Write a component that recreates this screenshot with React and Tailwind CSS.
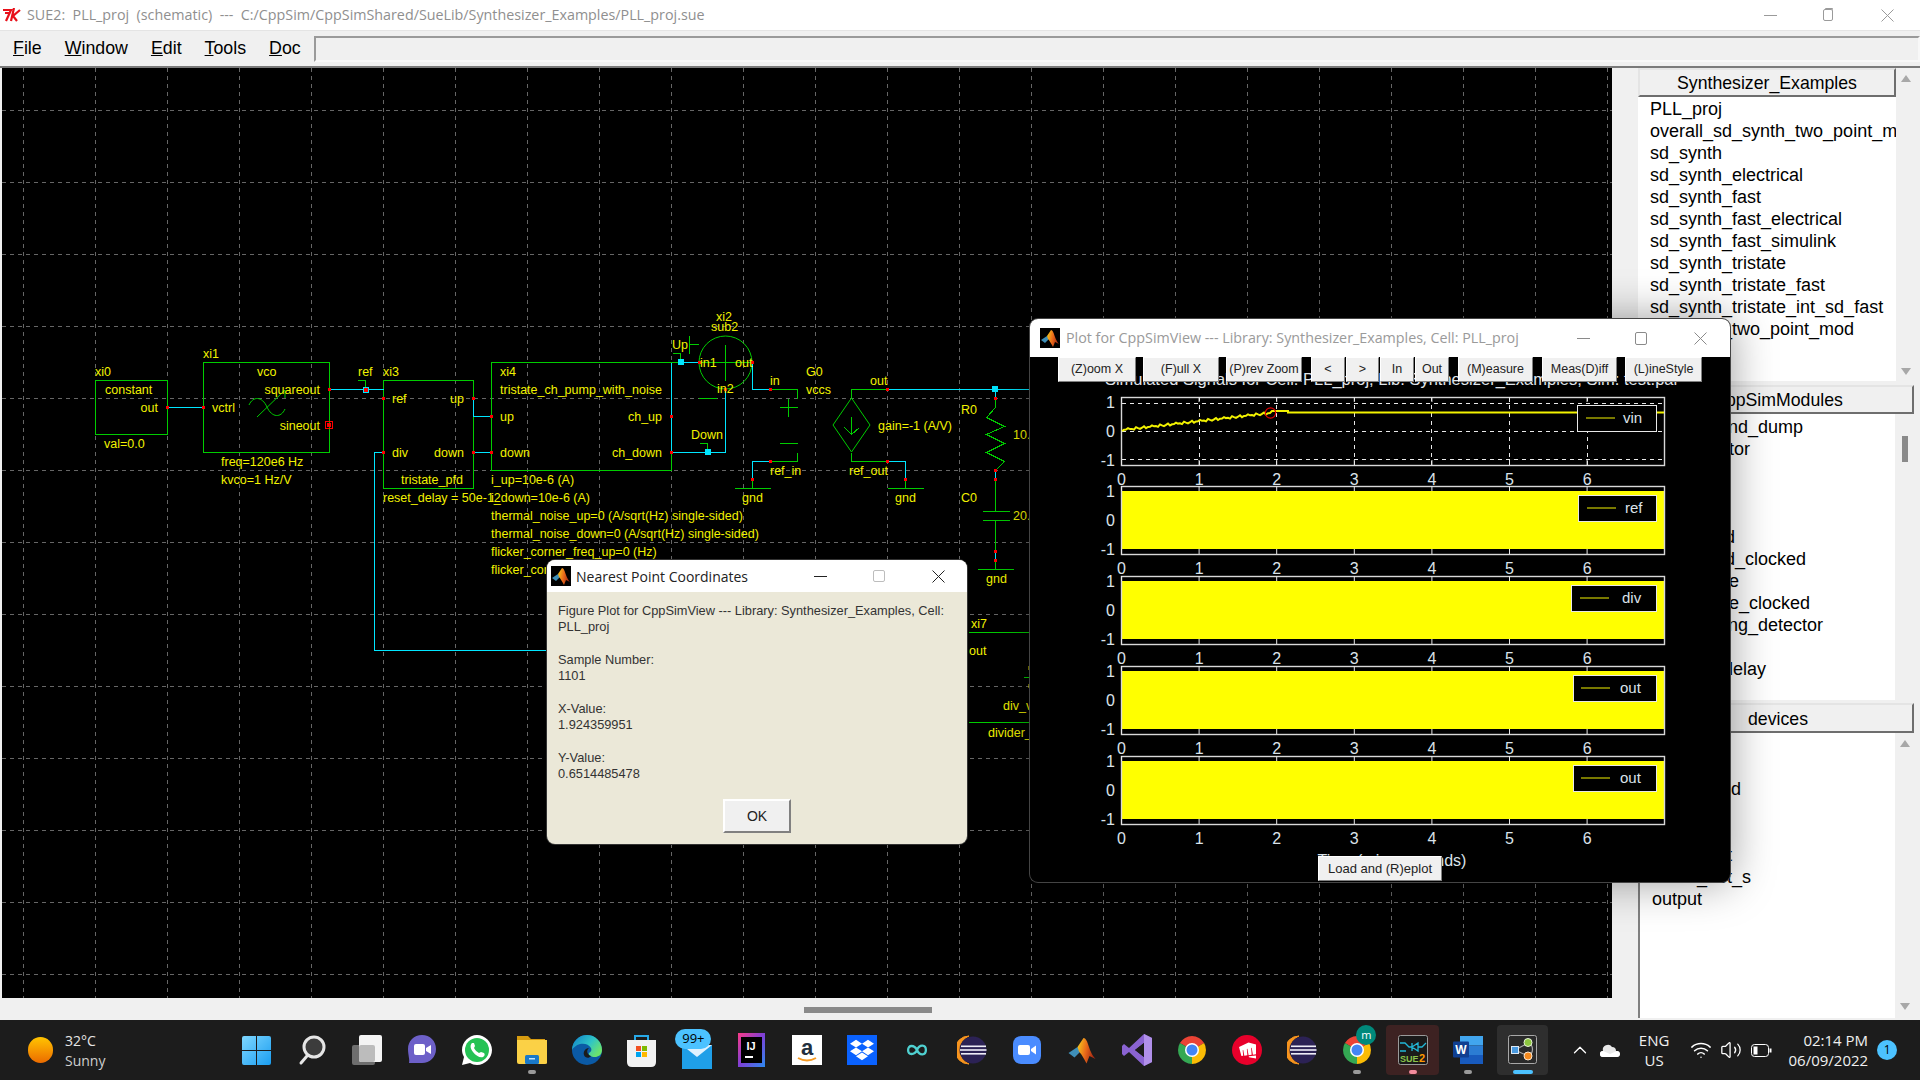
import { ChevronUp, Wifi, Volume2 } from 'lucide-react';
import { FaDropbox } from 'react-icons/fa';
import { SiRiotgames } from 'react-icons/si';

const YELLOW = '#f2f200';
const GREEN = '#00cc00';
const CYAN = '#00e6ff';
const RED = '#ff0000';

// schematic labels: x, baseline, text, anchor
const labels = [
  [95, 376, 'xi0'], [105, 394, 'constant'], [158, 412, 'out', 'end'], [104, 448, 'val=0.0'],
  [203, 358, 'xi1'], [257, 376, 'vco'], [320, 394, 'squareout', 'end'], [212, 412, 'vctrl'],
  [320, 430, 'sineout', 'end'], [221, 466, 'freq=120e6 Hz'], [221, 484, 'kvco=1 Hz/V'],
  [358, 376, 'ref'], [383, 376, 'xi3'], [392, 403, 'ref'], [464, 403, 'up', 'end'],
  [392, 457, 'div'], [464, 457, 'down', 'end'], [401, 484, 'tristate_pfd'], [383, 502, 'reset_delay = 50e-12'],
  [500, 376, 'xi4'], [500, 394, 'tristate_ch_pump_with_noise'], [500, 421, 'up'], [500, 457, 'down'],
  [662, 421, 'ch_up', 'end'], [662, 457, 'ch_down', 'end'], [491, 484, 'i_up=10e-6 (A)'], [491, 502, 'i_down=10e-6 (A)'],
  [491, 520, 'thermal_noise_up=0 (A/sqrt(Hz) single-sided)'], [491, 538, 'thermal_noise_down=0 (A/sqrt(Hz) single-sided)'],
  [491, 556, 'flicker_corner_freq_up=0 (Hz)'], [491, 574, 'flicker_corner_freq_down=0 (Hz)'],
  [716, 321, 'xi2'], [711, 331, 'sub2'], [672, 349, 'Up'], [700, 367, 'in1'], [735, 367, 'out'], [717, 393, 'in2'], [691, 439, 'Down'],
  [770, 385, 'in'], [806, 376, 'G0'], [806, 394, 'vccs'], [770, 475, 'ref_in'], [742, 502, 'gnd'],
  [870, 385, 'out'], [878, 430, 'gain=-1 (A/V)'], [849, 475, 'ref_out'], [895, 502, 'gnd'],
  [961, 414, 'R0'], [1013, 439, '10.'], [961, 502, 'C0'], [1013, 520, '20.'], [986, 583, 'gnd'],
  [971, 628, 'xi7'], [969, 655, 'out'], [1003, 710, 'div_v'], [988, 737, 'divider_'],
];

const greenLines = [
  '357,380 365,380 365,386', '491,362 680,362', '672,353 680,353 680,359', '699,443 707,443 707,449',
  '699,362 752,362', '725,344 725,380', '689,335 689,353', '689,344 698,344', '698,398 716,398',
  '770,389 797,389 797,398', '779,407 797,407', '788,398 788,416', '779,443 797,443', '797,452 797,461 770,461',
  '734,488 770,488', '752,479 752,488', '851,398 851,389 887,389', '851,452 851,461 887,461', '887,488 923,488', '905,479 905,488',
  '851,416 851,434', '844,427 851,434 859,427', '995,398 995,407 986,417 1004,426 986,434 1004,443 986,452 1004,461 995,470 995,511',
  '982,511 1009,511', '982,520 1009,520', '995,520 995,551', '977,569 1013,569', '995,560 995,569',
  '968,632 1030,632', '1023,677 1030,677', '968,722 1030,722',
];

const cyanLines = [
  '167,407 203,407', '330,389 383,389', '473,398 473,416 491,416', '473,452 491,452', '383,452 374,452 374,650 547,650',
  '671,362 671,452', '683,362 699,362', '671,452 725,452 725,389', '752,362 752,389 770,389', '770,461 752,461 752,479',
  '887,389 1030,389', '887,461 905,461 905,479', '995,389 995,398', '995,470 995,479', '995,551 995,560',
];

const pins = [
  [167, 407], [203, 407], [329, 389], [383, 398], [473, 398], [383, 452], [473, 452], [491, 416], [491, 452],
  [671, 416], [671, 452], [699, 362], [752, 362], [725, 389], [770, 389], [770, 461], [752, 479], [887, 389], [887, 461], [905, 479],
  [995, 398], [995, 470], [995, 479], [995, 551], [995, 560],
];

const gridX = Array.from({ length: 23 }, (_, i) => 23 + i * 72);
const gridY = Array.from({ length: 13 }, (_, i) => 110 + i * 72);

function Schematic() {
  return (
    <svg viewBox="2 68 1610 930" className="block w-full h-full" fontFamily="'Liberation Sans', Arial, sans-serif">
      <g stroke="#666666" strokeDasharray="4 4" shapeRendering="crispEdges">
        {gridX.map((x) => <line key={x} x1={x + 0.5} y1="68" x2={x + 0.5} y2="998" />)}
        {gridY.map((y) => <line key={y} x1="2" y1={y + 0.5} x2="1612" y2={y + 0.5} />)}
      </g>
      <g fill="none" stroke={GREEN} shapeRendering="crispEdges">
        <rect x="95.5" y="380.5" width="72" height="54" />
        <rect x="203.5" y="362.5" width="126" height="90" />
        <rect x="383.5" y="380.5" width="90" height="108" />
        <rect x="491.5" y="362.5" width="180" height="108" />
        {greenLines.map((p) => <polyline key={p} points={p} transform="translate(.5 .5)" />)}
      </g>
      <g fill="none" stroke={GREEN}>
        <circle cx="725.5" cy="362.5" r="26.5" />
        <path d="M833 425 L851.5 398 L870 425 L851.5 452Z" />
        <path d="M249 405 C253 396 262 396 267 407 C272 418 281 418 285 409" />
        <path d="M257 417 L285 390 L285 398" />
      </g>
      <g fill="none" stroke={CYAN} shapeRendering="crispEdges">
        {cyanLines.map((p) => <polyline key={p} points={p} transform="translate(.5 .5)" />)}
      </g>
      <g fill={RED} shapeRendering="crispEdges">
        {pins.map(([x, y]) => <rect key={x + '-' + y} x={x - 1} y={y - 1} width="3" height="3" />)}
        <rect x="325.5" y="421.5" width="7" height="7" fill="none" stroke={RED} />
        <rect x="327" y="423" width="4" height="4" />
      </g>
      <g shapeRendering="crispEdges">
        <rect x="363" y="387" width="5" height="5" fill={RED} stroke={CYAN} />
        <rect x="678" y="359" width="5.5" height="5.5" fill={CYAN} />
        <rect x="705" y="449" width="5.5" height="5.5" fill={CYAN} />
        <rect x="992" y="386" width="5.5" height="5.5" fill={CYAN} />
      </g>
      <g fill={YELLOW} fontSize="12.5">
        {labels.map(([x, y, t, a]) => <text key={x + t + y} x={x} y={y} textAnchor={a || 'start'}>{t}</text>)}
      </g>
      <path d="M1029 666 V670 M1029 684 V688" stroke={YELLOW} />
    </svg>
  );
}

function MatlabIcon({ size = 20, dark = true }) {
  return (
    <svg width={size} height={size} viewBox="0 0 20 20" className={dark ? 'bg-black' : ''}>
      <defs>
        <linearGradient id="mlPeak" x1="0" y1="0" x2="1" y2=".3">
          <stop offset="0" stopColor="#f8d41c" />
          <stop offset=".55" stopColor="#ea6a1a" />
          <stop offset="1" stopColor="#a82a12" />
        </linearGradient>
      </defs>
      <path d="M1 12 L7 8 L9 11 L5 15Z" fill="#3f8fb8" />
      <path d="M7 8 L11 2 C13 2 14 6 15 9 C16 12 18 15 19 16 L15 14 L13 19 C11 15 9 12 8 11Z" fill="url(#mlPeak)" />
    </svg>
  );
}

function WinControls({ minX, color = '#666666', gapA, gapB, boxClass }) {
  return (
    <div className="flex items-center" style={{ marginLeft: minX }}>
      <div className="h-px w-[13px]" style={{ background: color }} />
      <div className={boxClass} style={{ marginLeft: gapA }} />
      <svg width="13" height="13" viewBox="0 0 13 13" stroke={color} style={{ marginLeft: gapB }}>
        <path d="M.5.5 L12.5 12.5 M12.5.5 L.5 12.5" />
      </svg>
    </div>
  );
}

const toolbar = [
  ['(Z)oom X', 'w-[78px]'], ['(F)ull X', 'w-[76px] ml-[7px]'], ['(P)rev Zoom', 'w-[76px] ml-[7px]'],
  ['<', 'w-[34px] ml-[9px]'], ['>', 'w-[33px] ml-px'], ['In', 'w-[34px] ml-px'], ['Out', 'w-[34px] ml-px'],
  ['(M)easure', 'w-[75px] ml-[9px]'], ['Meas(D)iff', 'w-[75px] ml-[9px]'], ['(L)ineStyle', 'w-[77px] ml-[8px]'],
];

const bevel = 'bg-[#f0f0f0] border border-t-white border-l-white border-r-[#808080] border-b-[#808080] text-[#222222]';

const plotTops = [397, 486, 576, 666, 756];
const legends = [
  { name: 'vin', x: 1577, y: 405, w: 79, lx: 1586, tx: 1623 },
  { name: 'ref', x: 1578, y: 495, w: 78, lx: 1587, tx: 1625 },
  { name: 'div', x: 1571, y: 585, w: 85, lx: 1580, tx: 1622 },
  { name: 'out', x: 1573, y: 675, w: 83, lx: 1581, tx: 1620 },
  { name: 'out', x: 1573, y: 765, w: 83, lx: 1581, tx: 1620 },
];
const xTicks = [0, 1, 2, 3, 4, 5, 6].map((k) => [k, 1121.5 + k * 77.6]);

// the noisy settling part of the vin trace
const vinTrace = (() => {
  const pts = [];
  for (let x = 1122; x <= 1270; x += 2) {
    const noise = x % 8 === 0 ? -1.2 : x % 6 === 0 ? 1 : 0;
    pts.push(x + ',' + (430 - (17 * (x - 1122)) / 148 + noise).toFixed(1));
  }
  pts.push('1272,411', '1288,411', '1288,412.5', '1664,412.5');
  return pts.join(' ');
})();

function PlotChart() {
  return (
    <svg viewBox="1030 357 700 525" className="block w-full h-full" fontFamily="'Liberation Sans', Arial, sans-serif">
      <text x="1392" y="385" textAnchor="middle" fill="#e0e6ec" fontSize="16.5">Simulated Signals for Cell: PLL_proj, Lib: Synthesizer_Examples, Sim: test.par</text>
      {plotTops.map((t, i) => (
        <g key={t}>
          {i > 0 && <rect x="1121.5" y={t + 5} width="543" height="58" fill="#ffff00" />}
          {i === 0 && (
            <g stroke="#e8e8e8" strokeDasharray="4 4" shapeRendering="crispEdges">
              {xTicks.slice(1).map(([k, x]) => <line key={k} x1={x} y1={t} x2={x} y2={t + 68} />)}
              <line x1="1122" y1={t + 6} x2="1664" y2={t + 6} />
              <line x1="1122" y1={t + 34} x2="1664" y2={t + 34} />
              <line x1="1122" y1={t + 62} x2="1664" y2={t + 62} />
            </g>
          )}
          <rect x="1121.5" y={t + 0.5} width="543" height="68" fill="none" stroke="#d8d8d8" strokeWidth="1.4" />
          {xTicks.map(([k, x]) => (
            <g key={k} stroke="#e8e8e8">
              <line x1={x} y1={t} x2={x} y2={t + 5} />
              <line x1={x} y1={t + 63} x2={x} y2={t + 68} />
            </g>
          ))}
          <g fill="#dbe3ea" fontSize="16" textAnchor="end">
            <text x="1115" y={t + 11}>1</text>
            <text x="1115" y={t + 40}>0</text>
            <text x="1115" y={t + 69}>-1</text>
          </g>
          <g fill="#dbe3ea" fontSize="16" textAnchor="middle">
            {xTicks.map(([k, x]) => <text key={k} x={x} y={t + 88}>{k}</text>)}
          </g>
        </g>
      ))}
      <polyline points={vinTrace} fill="none" stroke="#f2f200" strokeWidth="2" />
      <circle cx="1270.5" cy="413" r="5.2" fill="none" stroke="#e00000" strokeWidth="1.2" />
      {legends.map((l) => (
        <g key={l.y}>
          <rect x={l.x + 0.5} y={l.y + 0.5} width={l.w} height="26" fill="#000000" stroke="#e8e8e8" />
          <line x1={l.lx} y1={l.y + 13} x2={l.lx + 29} y2={l.y + 13} stroke="#f2f200" />
          <text x={l.tx} y={l.y + 18} fill="#dbe3ea" fontSize="15">{l.name}</text>
        </g>
      ))}
      <text x="1392" y="866" textAnchor="middle" fill="#dbe3ea" fontSize="16">Time (microseconds)</text>
    </svg>
  );
}

function PlotWindow() {
  return (
    <div className="absolute left-[1030px] top-[319px] w-[700px] h-[563px] rounded-[8px] overflow-hidden bg-black flex flex-col shadow-[0_0_0_1px_#444444,0_0_45px_rgba(0,0,0,0.4)]">
      <div className="h-[38px] shrink-0 bg-white flex items-center pl-[10px]">
        <MatlabIcon />
        <span className="ml-[6px] w-[480px] text-[14.3px] text-[#9a9a9a] whitespace-nowrap font-['Open_Sans',sans-serif]">Plot for CppSimView --- Library: Synthesizer_Examples, Cell: PLL_proj</span>
        <WinControls minX={31} color="#8a8a8a" gapA={45} gapB={47} boxClass="w-[12px] h-[13px] rounded-[2px] border border-[#8a8a8a]" />
      </div>
      <div className="relative flex-1">
        <PlotChart />
        <div className="absolute top-0 left-[28px] flex">
          {toolbar.map(([label, cls]) => (
            <button key={label} className={`${cls} h-[25px] ${bevel} text-[12.5px] whitespace-nowrap font-['Liberation_Sans',sans-serif]`}>{label}</button>
          ))}
        </div>
        <button className={`absolute left-[288px] top-[499px] w-[124px] h-[25px] ${bevel} text-[13px] whitespace-nowrap font-['Liberation_Sans',sans-serif]`}>Load and (R)eplot</button>
      </div>
    </div>
  );
}

function Dialog() {
  return (
    <div className="absolute left-[547px] top-[560px] w-[420px] h-[284px] rounded-[8px] overflow-hidden bg-[#ebe8d8] flex flex-col shadow-[0_0_0_1px_#333333]">
      <div className="h-[32px] shrink-0 bg-white flex items-center pl-[4px]">
        <MatlabIcon />
        <span className="ml-[5px] w-[190px] text-[14px] text-[#222222] whitespace-nowrap font-['Open_Sans',sans-serif]">Nearest Point Coordinates</span>
        <WinControls minX={48} color="#222222" gapA={46} gapB={47} boxClass="w-[12px] h-[12px] rounded-[2px] border border-[#bdbdbd]" />
      </div>
      <div className="pl-[11px] pt-[11px] text-[12.8px] leading-[16.3px] text-[#333333] font-['Liberation_Sans',sans-serif]">
        Figure Plot for CppSimView --- Library: Synthesizer_Examples, Cell:<br />
        PLL_proj<br /><br />
        Sample Number:<br />
        1101<br /><br />
        X-Value:<br />
        1.924359951<br /><br />
        Y-Value:<br />
        0.6514485478
      </div>
      <div className="mt-auto mb-[11px] flex justify-center">
        <button className={`w-[68px] h-[34px] ${bevel} border-2 text-[14px] font-['Liberation_Sans',sans-serif]`}>OK</button>
      </div>
    </div>
  );
}

function ScrollArrows({ className }) {
  return (
    <div className={`flex flex-col justify-between items-center ${className}`}>
      <div className="w-0 h-0 border-x-[5px] border-x-transparent border-b-[7px] border-b-[#a8a8a8]" />
      <div className="w-0 h-0 border-x-[5px] border-x-transparent border-t-[7px] border-t-[#a8a8a8]" />
    </div>
  );
}

const rowClass = 'h-[22px] leading-[22px] whitespace-nowrap';

function ListRows({ items, className }) {
  return (
    <div className={`bg-white overflow-hidden text-black text-[18px] ${className}`}>
      {items.map((it, i) => <div key={it + i} className={rowClass}>{it}</div>)}
    </div>
  );
}

const headerClass = 'shrink-0 flex items-center justify-center pt-[2px] bg-[#f0f0f0] border-2 border-t-[#e4e4e4] border-l-[#e4e4e4] border-r-[#6e6e6e] border-b-[#6e6e6e] text-black text-[17.7px]';

const listOne = ['PLL_proj', 'overall_sd_synth_two_point_m', 'sd_synth', 'sd_synth_electrical', 'sd_synth_fast', 'sd_synth_fast_electrical', 'sd_synth_fast_simulink', 'sd_synth_tristate', 'sd_synth_tristate_fast', 'sd_synth_tristate_int_sd_fast', 'sd_synth_two_point_mod'];
const listTwo = ['sample_and_dump', 'demodulator', 'mux', 'noise', 'inv', 'and_gated', 'and_gated_clocked', 'mux_mode', 'mux_mode_clocked', 'edge_timing_detector', 'nor', 'variable_delay'];
const listThree = ['vdd', 'nmos', 'power_gnd', 'pmos', 'gnd', 'name_net', 'name_net_s', 'output'];

function RightPanel() {
  return (
    <div className="w-[282px] h-full flex flex-col font-['Liberation_Sans',sans-serif]">
      <div className="flex h-[313px]">
        <div className="w-[258px] flex flex-col">
          <div className={`${headerClass} h-[29px]`}>Synthesizer_Examples</div>
          <ListRows items={listOne} className="flex-1 pl-[12px] pt-px" />
        </div>
        <ScrollArrows className="w-[20px] pt-[7px] pb-[6px]" />
      </div>
      <div className="h-[4px]" />
      <div className={`${headerClass} h-[29px] w-[276px] pl-[4px]`}>CppSimModules</div>
      <div className="flex h-[286px]">
        <ListRows items={listTwo} className="w-[257px] pl-[12px] pt-[2px]" />
        <div className="w-[19px] pt-[22px] flex justify-center">
          <div className="w-[6px] h-[26px] bg-[#8a8a8a]" />
        </div>
      </div>
      <div className="h-[3px]" />
      <div className={`${headerClass} h-[30px] w-[276px] pl-[4px]`}>devices</div>
      <div className="flex h-[285px]">
        <ListRows items={listThree} className="w-[257px] pl-[12px] pt-px border-l-2 border-l-[#808080]" />
        <ScrollArrows className="w-[19px] pt-[7px] pb-[8px]" />
      </div>
    </div>
  );
}

/* ---- taskbar icons ---- */
const Win = () => (
  <svg width="29" height="29" viewBox="0 0 29 29">
    <defs><linearGradient id="wg" x1="0" y1="0" x2="1" y2="1"><stop offset="0" stopColor="#7fd7ff" /><stop offset="1" stopColor="#1a9df0" /></linearGradient></defs>
    <path d="M0 2 Q0 0 2 0 H14 V14 H0Z M15 0 H27 Q29 0 29 2 V14 H15Z M0 15 H14 V29 H2 Q0 29 0 27Z M15 15 H29 V27 Q29 29 27 29 H15Z" fill="url(#wg)" />
  </svg>
);
const Search = () => (
  <svg width="30" height="32" viewBox="0 0 30 32">
    <circle cx="17" cy="13" r="10" fill="#3c3c3c" stroke="#e6e6e6" strokeWidth="3" />
    <path d="M10 22 L4 29" stroke="#e6e6e6" strokeWidth="3" strokeLinecap="round" />
  </svg>
);
const TaskView = () => (
  <svg width="30" height="30" viewBox="0 0 30 30">
    <rect x="0" y="10" width="23" height="20" rx="2" fill="#6e6e6e" />
    <rect x="7" y="0" width="23" height="27" rx="2" fill="#f4f4f4" />
    <rect x="7" y="10" width="16" height="17" rx="2" fill="#bcbcbc" />
  </svg>
);
const Teams = () => (
  <svg width="28" height="30" viewBox="0 0 28 30">
    <path d="M14 0 C22 0 28 6 28 14 C28 22 22 28 14 28 H1 C2 25 0 20 0 14 C0 6 6 0 14 0Z" fill="#6d60c8" />
    <rect x="6" y="9" width="11" height="11" rx="2" fill="#fff" />
    <path d="M18 13 L23 10 V19 L18 16Z" fill="#fff" />
  </svg>
);
const Whatsapp = () => (
  <svg width="30" height="30" viewBox="0 0 30 30">
    <path d="M15 0 C23 0 30 7 30 15 C30 23 23 30 15 30 C12 30 10 29 8 28 L0 30 L2 22 C1 20 0 18 0 15 C0 7 7 0 15 0Z" fill="#fff" />
    <circle cx="15" cy="15" r="12" fill="#25c254" />
    <path d="M10 8 C8 10 8 13 11 17 C14 21 18 23 21 22 C23 21 23 19 22 18 L19 17 L17 18 C15 17 13 15 12 13 L13 11 L12 8Z" fill="#fff" />
  </svg>
);
const Explorer = () => (
  <svg width="30" height="32" viewBox="0 0 30 32">
    <path d="M0 2 H11 L14 5 H28 V12 H0Z" fill="#d79c10" />
    <path d="M0 6 H30 V29 Q30 30 28 30 H2 Q0 30 0 28Z" fill="#fbd146" />
    <rect x="8" y="21" width="14" height="9" rx="1.5" fill="#1a79c8" />
    <rect x="12" y="24" width="6" height="1.5" fill="#bfe3ff" />
  </svg>
);
const Edge = () => (
  <svg width="30" height="30" viewBox="0 0 30 30">
    <defs><linearGradient id="eg" x1="0" y1="0" x2="1" y2=".6"><stop offset="0" stopColor="#0f7fc9" /><stop offset=".6" stopColor="#2fc4c7" /><stop offset="1" stopColor="#6be36d" /></linearGradient></defs>
    <circle cx="15" cy="15" r="15" fill="#0b5aa5" />
    <path d="M0 15 A15 15 0 0 1 30 15 C30 20 26 22 23 22 C19 22 16 20 17 18 C19 17 20 15 19 13 C17 9 12 8 8 9 C4 10 1 13 0 15Z" fill="url(#eg)" />
    <path d="M19 21 C17 24 13 23 12 20 C11 17 13 13 17 13 C14 15 15 20 19 21Z" fill="#1b1b1b" />
  </svg>
);
const Store = () => (
  <svg width="29" height="33" viewBox="0 0 29 33">
    <path d="M8 6 V2 H21 V6" fill="none" stroke="#27a9e8" strokeWidth="2" />
    <path d="M0 6 H29 V28 Q29 33 24 33 H5 Q0 33 0 28Z" fill="#f2f2f2" />
    <rect x="9" y="12" width="5" height="5" fill="#f25022" />
    <rect x="15" y="12" width="5" height="5" fill="#7fba00" />
    <rect x="9" y="18" width="5" height="5" fill="#00a4ef" />
    <rect x="15" y="18" width="5" height="5" fill="#ffb900" />
  </svg>
);
const Mail = () => (
  <svg width="30" height="24" viewBox="0 0 30 24">
    <rect width="30" height="24" fill="#1f9fe8" />
    <path d="M0 0 L15 12 L30 0Z" fill="#dff2ff" />
  </svg>
);
const Idea = () => (
  <svg width="27" height="34" viewBox="0 0 27 34">
    <defs><linearGradient id="ig" x1="0" y1="0" x2="1" y2="1"><stop offset="0" stopColor="#fc3a86" /><stop offset=".5" stopColor="#7d3fd6" /><stop offset="1" stopColor="#2b8bf0" /></linearGradient></defs>
    <rect width="27" height="34" fill="url(#ig)" />
    <rect x="3" y="4" width="21" height="26" fill="#000" />
    <text x="13" y="17" textAnchor="middle" fontSize="11" fontWeight="bold" fill="#fff" fontFamily="'Liberation Sans', sans-serif">IJ</text>
    <rect x="7" y="23" width="8" height="2" fill="#fff" />
  </svg>
);
const Amazon = () => (
  <svg width="30" height="30" viewBox="0 0 30 30">
    <rect width="30" height="30" fill="#fff" />
    <text x="15" y="20" textAnchor="middle" fontSize="22" fontWeight="bold" fill="#232f3e" fontFamily="'Liberation Sans', sans-serif">a</text>
    <path d="M6 23 Q15 28 24 23" fill="none" stroke="#f59a23" strokeWidth="2" />
  </svg>
);
const Dropbox = () => (
  <div className="w-[30px] h-[30px] bg-[#0a62ff] flex items-center justify-center"><FaDropbox size={24} color="#ffffff" /></div>
);
const Infinity2 = () => (
  <svg width="22" height="16" viewBox="0 0 24 18" fill="none" stroke="#4fd0d0" strokeWidth="2.6">
    <path d="M12 9 C9 3 2 3 2 9 C2 15 9 15 12 9 C15 2 22 3 22 9 C22 15 15 16 12 9Z" />
  </svg>
);
const Eclipse = () => (
  <svg width="30" height="30" viewBox="0 0 30 30">
    <path d="M12 1 A14 14 0 0 0 12 29 A15 15 0 0 1 12 1Z" fill="#f7941e" stroke="#f7941e" />
    <circle cx="16" cy="15" r="13.5" fill="#2c2255" />
    <g fill="#f0eef8"><rect x="4" y="10.5" width="25" height="1.6" /><rect x="3" y="14.2" width="26.5" height="1.6" /><rect x="4" y="18" width="25" height="1.6" /></g>
  </svg>
);
const Zoom = () => (
  <svg width="28" height="28" viewBox="0 0 28 28">
    <rect width="28" height="28" rx="8" fill="#4a8cff" />
    <rect x="5" y="9" width="12" height="10" rx="2" fill="#fff" />
    <path d="M18 13 L23 9.5 V18.5 L18 15Z" fill="#fff" />
  </svg>
);
const VS = () => (
  <svg width="30" height="32" viewBox="0 0 30 32">
    <path d="M22 0 L30 4 V28 L22 32 L7 18 L2 22 L0 20 V12 L2 10 L7 14Z M22 9 L13 16 L22 23Z" fill="#8a63d2" fillRule="evenodd" />
    <path d="M22 0 L30 4 V28 L22 32Z" fill="#b190ea" />
    <path d="M22 9 L22 23 L13 16Z" fill="#1c1c1c" />
  </svg>
);
const Chrome = () => (
  <svg width="28" height="28" viewBox="2 2 28 28">
    <path d="M16 16 L3.9 9 A14 14 0 0 1 28.1 9Z" fill="#ea4335" />
    <path d="M16 16 L28.1 9 A14 14 0 0 1 16 30Z" fill="#fbbc05" />
    <path d="M16 16 L16 30 A14 14 0 0 1 3.9 9Z" fill="#34a853" />
    <circle cx="16" cy="16" r="7" fill="#fff" />
    <circle cx="16" cy="16" r="5.5" fill="#4285f4" />
  </svg>
);
const Riot = () => (
  <div className="w-[30px] h-[30px] rounded-full bg-[#e8002b] flex items-center justify-center"><SiRiotgames size={17} color="#ffffff" /></div>
);
const ChromeM = () => (
  <div className="relative">
    <Chrome />
    <div className="absolute -top-[11px] left-[13px] w-[20px] h-[20px] rounded-full bg-[#00897b] flex items-center justify-center text-[11px] text-white">m</div>
  </div>
);
const Sue = () => (
  <svg width="30" height="30" viewBox="0 0 30 30">
    <rect x=".5" y=".5" width="29" height="29" rx="2" fill="#1a1a1a" stroke="#9a9a9a" />
    <path d="M2 8 H7 L11 12 H14 M14 8 V16 M14 12 L20 8 V16 L14 12 M20 12 H24 L28 8 M2 16 H8" fill="none" stroke="#22b8d8" strokeWidth="1.3" />
    <text x="2" y="27" fontSize="9" fontWeight="bold" fill="#8bc34a" fontFamily="'Liberation Sans', sans-serif">SUE</text>
    <text x="21" y="27" fontSize="11" fontWeight="bold" fill="#ff9800" fontFamily="'Liberation Sans', sans-serif">2</text>
  </svg>
);
const Word = () => (
  <svg width="30" height="28" viewBox="0 0 30 28">
    <rect x="7" y="0" width="23" height="9.5" fill="#41a5ee" />
    <rect x="7" y="9.5" width="23" height="9.5" fill="#2b7cd3" />
    <rect x="7" y="19" width="23" height="9" fill="#185abd" />
    <rect x="0" y="5.5" width="16" height="16" rx="1" fill="#103f91" />
    <text x="8" y="18" textAnchor="middle" fontSize="12" fontWeight="bold" fill="#fff" fontFamily="'Liberation Sans', sans-serif">W</text>
  </svg>
);
const CppSim = () => (
  <svg width="30" height="30" viewBox="0 0 30 30">
    <rect x=".5" y=".5" width="28" height="28" rx="2" fill="#2a2a2a" stroke="#a8a8a8" />
    <path d="M7 15 L20 8 C26 10 26 18 20 21 L7 15" fill="none" stroke="#a8a8a8" strokeWidth="1.2" />
    <rect x="3.5" y="11.5" width="7" height="7" fill="#4a9ae0" stroke="#dce8f4" />
    <circle cx="20" cy="7.5" r="4" fill="#8cc63f" stroke="#e8f4d8" />
    <circle cx="20" cy="21" r="4" fill="#f58a1f" stroke="#fbe8d2" />
  </svg>
);

const taskIcons = [
  { C: Win }, { C: Search }, { C: TaskView }, { C: Teams }, { C: Whatsapp }, { C: Explorer, dot: true }, { C: Edge }, { C: Store },
  { C: Mail, mail: true }, { C: Idea }, { C: Amazon }, { C: Dropbox }, { C: Infinity2 }, { C: Eclipse }, { C: Zoom },
  { C: () => <MatlabIcon size={30} dark={false} /> }, { C: VS }, { C: Chrome }, { C: Riot }, { C: Eclipse }, { C: ChromeM, dot: true },
  { C: Sue, sue: true }, { C: Word, dot: true }, { C: CppSim, active: true },
];

function TaskSlot({ item }) {
  const { C, dot, mail, sue, active } = item;
  return (
    <div className="relative w-[55.05px] h-full flex items-center justify-center">
      {sue && <div className="absolute inset-y-[5px] inset-x-[1px] rounded-[4px] bg-[#3d2222]" />}
      {active && <div className="absolute inset-y-[5px] inset-x-[2px] rounded-[4px] bg-[#2e2e2e]" />}
      <div className={`relative ${mail ? 'mt-[14px]' : ''}`}><C /></div>
      {mail && <div className="absolute left-[6px] top-[9px] w-[36px] h-[20px] rounded-[10px] bg-[#4cc2ff] flex items-center justify-center text-[13px] text-black">99+</div>}
      {dot && <div className="absolute bottom-[6px] w-[8px] h-[4px] rounded-full bg-[#9a9a9a]" />}
      {sue && <div className="absolute bottom-[6px] w-[8px] h-[4px] rounded-full bg-[#f28b9c]" />}
      {active && <div className="absolute bottom-[6px] w-[20px] h-[4px] rounded-full bg-[#4cc2ff]" />}
    </div>
  );
}

function Taskbar() {
  return (
    <div className="h-[60px] shrink-0 bg-[#1c1c1c] flex items-center text-white font-['Open_Sans',sans-serif]">
      <div className="w-[229px] flex items-center pl-[28px]">
        <div className="w-[25px] h-[26px] rounded-full bg-gradient-to-b from-[#ffc400] to-[#ea6a00]" />
        <div className="ml-[12px] mt-px text-[14px] leading-[20px] text-[#e6e6e6]">
          <div>32°C</div>
          <div className="text-[#cfcfcf]">Sunny</div>
        </div>
      </div>
      <div className="flex h-full">
        {taskIcons.map((item, i) => <TaskSlot key={i} item={item} />)}
      </div>
      <ChevronUp size={22} strokeWidth={1.4} className="ml-[19px] text-white" />
      <svg width="20" height="13" viewBox="0 0 20 13" className="ml-[9px]">
        <path d="M3 13 A3 3 0 0 1 3 7 A5 5 0 0 1 12 3 A4 4 0 0 1 16 7 A3 3 0 0 1 17 13Z" fill="#e8e8e8" />
        <path d="M3 13 A3 3 0 0 1 3 7 L10 10 L17 7 A3 3 0 0 1 17 13Z" fill="#ffffff" />
      </svg>
      <div className="ml-[11px] w-[46px] text-center text-[15px] leading-[20px] text-[#f0f0f0]">
        <div>ENG</div>
        <div>US</div>
      </div>
      <Wifi size={22} strokeWidth={1.7} className="ml-[13px] text-white" />
      <Volume2 size={22} strokeWidth={1.4} className="ml-[8px] text-white" />
      <svg width="21" height="13" viewBox="0 0 21 13" className="ml-[9px]" fill="none" stroke="#ffffff">
        <rect x=".5" y=".5" width="17" height="12" rx="3" />
        <rect x="2.5" y="2.5" width="4" height="8" fill="#ffffff" stroke="none" />
        <path d="M19.5 4.5 V8.5" strokeWidth="2" />
      </svg>
      <div className="ml-[5px] w-[91px] text-right text-[15px] leading-[20px] text-[#f0f0f0] whitespace-nowrap">
        <div>02:14 PM</div>
        <div>06/09/2022</div>
      </div>
      <div className="ml-[9px] w-[20px] h-[20px] rounded-full bg-[#4cc2ff] flex items-center justify-center text-[12px] text-black">1</div>
    </div>
  );
}

export default function App() {
  return (
    <div className="relative w-[1920px] h-[1080px] overflow-hidden bg-[#f0f0f0] flex flex-col">
      {/* main window title */}
      <div className="h-[30px] shrink-0 bg-white flex items-center pl-[3px]">
        <svg width="19" height="14" viewBox="0 0 19 14" fill="none" stroke="#e8101a" strokeWidth="2.2">
          <path d="M0 2 H8 L3 13 M11 0 L8 13 M17 2 L10 8 L14 13 M7 5 H2" />
        </svg>
        <span className="ml-[5px] w-[1680px] text-[14.3px] text-[#8f8f8f] whitespace-pre font-['Open_Sans',sans-serif]">SUE2:  PLL_proj  (schematic)  ---  C:/CppSim/CppSimShared/SueLib/Synthesizer_Examples/PLL_proj.sue</span>
        <WinControls minX={57} color="#9a9a9a" gapA={46} gapB={48} boxClass="w-[10px] h-[12px] rounded-[2px] border border-[#9a9a9a] shadow-[1px_-2px_0_-1px_#9a9a9a]" />
      </div>
      {/* menu bar */}
      <div className="h-[38px] shrink-0 flex items-center pl-[13px] gap-[23px] border-t border-t-[#e4e4e4] border-b-2 border-b-[#7a7a7a] text-[17.8px] text-black font-['Liberation_Sans',sans-serif]">
        <span><span className="underline">F</span>ile</span>
        <span><span className="underline">W</span>indow</span>
        <span><span className="underline">E</span>dit</span>
        <span><span className="underline">T</span>ools</span>
        <span><span className="underline">D</span>oc</span>
        <div className="flex-1 -ml-[10px] h-[26px] border-2 border-t-[#9a9a9a] border-l-[#9a9a9a] border-r-[#f8f8f8] border-b-[#f8f8f8]" />
      </div>
      {/* canvas and module lists */}
      <div className="flex-1 flex min-h-0">
        <div className="w-[1638px] flex flex-col">
          <div className="ml-[2px] w-[1610px] h-[930px] bg-black overflow-hidden">
            <Schematic />
          </div>
          <div className="pl-[804px] pt-[9px]">
            <div className="w-[128px] h-[6px] bg-[#8a8a8a]" />
          </div>
        </div>
        <RightPanel />
      </div>
      <Taskbar />
      <PlotWindow />
      <Dialog />
    </div>
  );
}
